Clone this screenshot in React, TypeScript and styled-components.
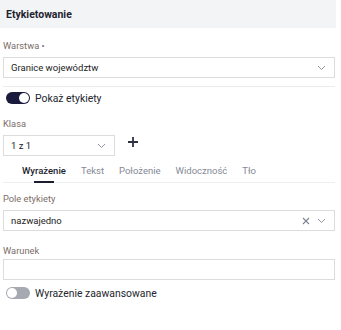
import { FC, useState } from "react";
import styled, { createGlobalStyle } from "styled-components";

const GlobalStyle = createGlobalStyle`
  body {
    margin: 0;
    background: #ffffff;
    font-family: Roboto, "Noto Sans", sans-serif;
  }
`;

const Panel = styled.div`
  width: 336px;
  display: flex;
  flex-direction: column;
`;

const Header = styled.div`
  height: 28px;
  background: #f3f4f6;
  display: flex;
  align-items: center;
  padding-left: 6px;
  font-size: 10.5px;
  font-weight: 700;
  color: #1f2430;
`;

const Body = styled.div`
  padding: 0 1px 0 3px;
  display: flex;
  flex-direction: column;
`;

const Label = styled.div<{ $top: number }>`
  margin-top: ${(p) => p.$top}px;
  font-size: 9.3px;
  color: #7b6e68;
  height: 14px;
  line-height: 14px;
`;

const SelectBox = styled.div<{ $width?: number }>`
  margin-top: 4px;
  height: 21px;
  width: ${(p) => (p.$width ? `${p.$width}px` : "auto")};
  box-sizing: border-box;
  border: 1px solid #dcdcdc;
  display: flex;
  align-items: center;
  padding: 0 8px 0 7px;
  font-size: 9.5px;
  color: #232323;
`;

const SelectText = styled.span`
  flex: 1;
`;

const Icons = styled.span`
  display: flex;
  align-items: center;
  gap: 7px;
  color: #8f96a3;
`;

const Divider = styled.div`
  height: 1px;
  background: #e9ebee;
  margin-top: 8px;
`;

const ToggleRow = styled.label<{ $top: number }>`
  display: flex;
  align-items: center;
  gap: 5px;
  margin-top: ${(p) => p.$top}px;
  padding-left: 3px;
  height: 14px;
  font-size: 10.4px;
  color: #23262e;
`;

const Track = styled.span<{ $on: boolean }>`
  width: 24px;
  height: 12px;
  border-radius: 6px;
  background: ${(p) => (p.$on ? "#191a3c" : "#a6a9b1")};
  position: relative;
  flex: none;
`;

const Knob = styled.span<{ $on: boolean }>`
  position: absolute;
  top: 1px;
  left: ${(p) => (p.$on ? "13px" : "1px")};
  width: 10px;
  height: 10px;
  border-radius: 50%;
  background: #ffffff;
`;

const ClassRow = styled.div`
  display: flex;
  align-items: center;
  gap: 13px;
`;

const PlusButton = styled.button`
  border: none;
  background: transparent;
  padding: 0;
  margin-top: -4px;
  color: #2d3142;
  display: flex;
  cursor: pointer;
`;

const Tabs = styled.div`
  margin-top: 3px;
  display: flex;
  gap: 15px;
  border-bottom: 1px solid #eceef1;
  padding-left: 19px;
`;

const Tab = styled.div<{ $active?: boolean }>`
  position: relative;
  padding: 5px 0;
  height: 13px;
  line-height: 13px;
  font-size: 9.5px;
  color: ${(p) => (p.$active ? "#1b1e2e" : "#838996")};
  font-weight: ${(p) => (p.$active ? 500 : 400)};
  &::after {
    content: "";
    display: ${(p) => (p.$active ? "block" : "none")};
    position: absolute;
    left: 50%;
    bottom: -1px;
    width: 20px;
    margin-left: -10px;
    height: 2px;
    background: #1b1e2e;
  }
`;

const TextInput = styled.input`
  margin-top: 1px;
  height: 21px;
  box-sizing: border-box;
  border: 1px solid #dcdcdc;
  outline: none;
  font: inherit;
`;

const Chevron: FC = () => (
  <svg width="9" height="6" viewBox="0 0 9 6" fill="none">
    <path d="M1 1l3.5 3.5L8 1" stroke="#8f96a3" strokeWidth="1" />
  </svg>
);

const Cross: FC = () => (
  <svg width="8" height="8" viewBox="0 0 8 8" fill="none">
    <path d="M1 1l6 6M7 1L1 7" stroke="#7d8491" strokeWidth="1.1" />
  </svg>
);

const Toggle: FC<{ on: boolean; label: string; top: number; onClick: () => void }> = ({
  on,
  label,
  top,
  onClick,
}) => (
  <ToggleRow $top={top} onClick={onClick}>
    <Track $on={on}>
      <Knob $on={on} />
    </Track>
    {label}
  </ToggleRow>
);

const tabs = ["Wyrażenie", "Tekst", "Położenie", "Widoczność", "Tło"];

const App: FC = () => {
  const [showLabels, setShowLabels] = useState(true);
  const [advanced, setAdvanced] = useState(false);
  const [active, setActive] = useState(0);

  return (
    <Panel>
      <GlobalStyle />
      <Header>Etykietowanie</Header>
      <Body>
        <Label $top={11}>Warstwa •</Label>
        <SelectBox>
          <SelectText>Granice województw</SelectText>
          <Icons>
            <Chevron />
          </Icons>
        </SelectBox>
        <Divider />
        <Toggle top={4} on={showLabels} label="Pokaż etykiety" onClick={() => setShowLabels((v) => !v)} />
        <Label $top={12}>Klasa</Label>
        <ClassRow>
          <SelectBox $width={112}>
            <SelectText>1 z 1</SelectText>
            <Icons>
              <Chevron />
            </Icons>
          </SelectBox>
          <PlusButton type="button">
            <svg width="10" height="10" viewBox="0 0 10 10">
              <path d="M5 0v10M0 5h10" stroke="currentColor" strokeWidth="1.8" />
            </svg>
          </PlusButton>
        </ClassRow>
        <Tabs>
          {tabs.map((t, i) => (
            <Tab key={t} $active={i === active} onClick={() => setActive(i)}>
              {t}
            </Tab>
          ))}
        </Tabs>
        <Label $top={9}>Pole etykiety</Label>
        <SelectBox>
          <SelectText>nazwajedno</SelectText>
          <Icons>
            <Cross />
            <Chevron />
          </Icons>
        </SelectBox>
        <Label $top={13}>Warunek</Label>
        <TextInput />
        <Toggle top={6} on={advanced} label="Wyrażenie zaawansowane" onClick={() => setAdvanced((v) => !v)} />
      </Body>
    </Panel>
  );
};

export default App;
